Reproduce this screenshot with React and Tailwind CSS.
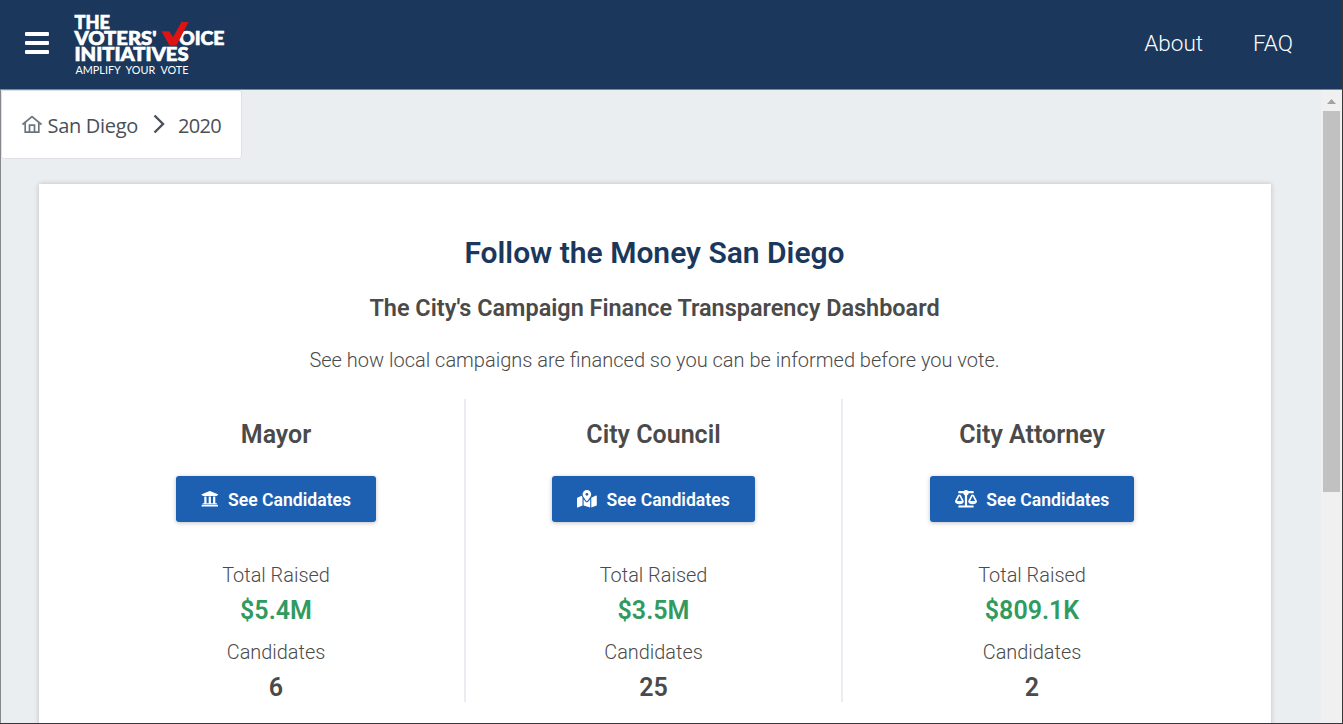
import { FaUniversity, FaMapMarkedAlt, FaBalanceScale } from "react-icons/fa";

const races = [
  { title: "Mayor", Icon: FaUniversity, iconClass: "h-[17.6px] w-[17.6px]", raised: "$5.4M", candidates: "6" },
  { title: "City Council", Icon: FaMapMarkedAlt, iconClass: "h-[17.6px] w-[19.8px]", raised: "$3.5M", candidates: "25" },
  { title: "City Attorney", Icon: FaBalanceScale, iconClass: "h-[17.6px] w-[22px]", raised: "$809.1K", candidates: "2" },
];

function Logo() {
  return (
    <svg width="152" height="64" viewBox="0 0 152 64" fill="#fff" className="overflow-visible font-['Lato',sans-serif]">
      <g fontWeight="900" fontSize="19.5" stroke="#fff" strokeWidth="0.7">
        <text x="0.5" y="17.200" textLength="35.500" lengthAdjust="spacingAndGlyphs">THE</text>
        <text x="0.5" y="33.400" textLength="82" lengthAdjust="spacingAndGlyphs">VOTERS'</text>
        <text x="105" y="33.400" textLength="45.5" lengthAdjust="spacingAndGlyphs">OICE</text>
        <text x="0.5" y="49.400" textLength="114" lengthAdjust="spacingAndGlyphs">INITIATIVES</text>
      </g>
      <path d="M87.500 19.200h7.800l3.700 6L107.500 10h7L102.500 33.500h-7z" fill="#dc1414" />
      <text x="1.500" y="61.700" fontSize="11.5" wordSpacing="3" textLength="113" lengthAdjust="spacingAndGlyphs">AMPLIFY YOUR VOTE</text>
    </svg>
  );
}

function Header() {
  return (
    <header className="flex h-[89px] shrink-0 items-start bg-[#1b385c] text-white">
      <button aria-label="Menu" className="mt-8 ml-[25px] flex h-[22px] w-6 flex-col justify-between">
        <span className="h-1 w-full rounded-[1px] bg-white" />
        <span className="h-1 w-full rounded-[1px] bg-white" />
        <span className="h-1 w-full rounded-[1px] bg-white" />
      </button>
      <div className="mt-3 ml-[25px]">
        <Logo />
      </div>
      <nav className="mt-[25px] mr-[49px] ml-auto flex gap-[50px] text-[22.500px] leading-9 font-light">
        <a>About</a>
        <a>FAQ</a>
      </nav>
    </header>
  );
}

function Breadcrumb() {
  return (
    <div className="flex h-[69px] w-[241px] items-center rounded-[3px] border border-[#dee2e6] bg-white pt-[2px] pl-5 font-['Open_Sans',sans-serif] text-[20px] tracking-[-0.3px] text-[#495057]">
      <svg width="20" height="20" viewBox="0 0 20 20" fill="none" stroke="#6c757d" strokeWidth="1.700" className="-mt-[3px] shrink-0">
        <path d="M0.500 10.500L10 2.500L19.500 10.500M3.200 8.500V18.200H16.800V8.500M7.500 18V11.200H12.500V18" />
      </svg>
      <span className="ml-[5.500px] w-[90.500px] whitespace-nowrap">San Diego</span>
      <svg width="12" height="20" viewBox="0 0 12 20" fill="none" stroke="#495057" strokeWidth="2.400" className="-mt-[3px] ml-[15px] shrink-0">
        <path d="M1.500 1.500L10 10L1.500 18.500" />
      </svg>
      <span className="ml-[13px] tracking-[-0.7px]">2020</span>
    </div>
  );
}

function Race({ title, Icon, iconClass, raised, candidates, last }) {
  return (
    <div className={"flex h-[303px] flex-col items-center " + (last ? "" : "border-r-2 border-[#e9edf1]")}>
      <h3 className="mt-[18px] text-[25px] leading-9 font-semibold">{title}</h3>
      <button className="mt-[23px] flex h-[46px] shrink-0 items-center rounded-[3px] bg-[#1d5fb1] px-[25px] text-[17.6px] font-semibold text-white shadow-[0_1px_4px_rgba(0,0,0,0.25)]">
        <Icon className={iconClass} />
        <span className="ml-[9.500px] pt-[2px] whitespace-nowrap">See Candidates</span>
      </button>
      <p className="mt-[39px] text-[19.900px] leading-[30px] font-light">Total Raised</p>
      <p className="mt-[3px] text-[25px] leading-[34px] font-semibold text-[#319a5f]">{raised}</p>
      <p className="mt-[10px] text-[19.900px] leading-[30px] font-light">Candidates</p>
      <p className="mt-[3px] text-[25px] leading-[34px] font-semibold">{candidates}</p>
    </div>
  );
}

function Scrollbar() {
  return (
    <div className="flex w-[21px] shrink-0 flex-col items-center bg-[#f0f0f0]">
      <svg width="9" height="5" viewBox="0 0 9 5" className="mt-[9px]" fill="#a3a3a3">
        <path d="M0 5L4.500 0L9 5z" />
      </svg>
      <div className="mt-[7px] h-[381px] w-[17px] bg-[#c1c1c1]" />
    </div>
  );
}

export default function App() {
  return (
    <div className="flex h-[724px] w-[1343px] flex-col overflow-hidden border-r border-b border-[#38363a] bg-[#1b385c] font-['Roboto',sans-serif] text-[#4a4a4a]">
      <Header />
      <div className="flex min-h-0 flex-1 border-t border-l border-[#85878c] bg-[#eaeef1]">
        <main className="min-w-0 flex-1">
          <Breadcrumb />
          <section className="mt-[25px] ml-[38px] h-[600px] w-[1232px] bg-white pt-[51px] pr-[50px] pl-[49px] text-center shadow-[0_0_5px_rgba(0,0,0,0.2)]">
            <h1 className="text-[30px] leading-9 font-semibold text-[#1b385c]">Follow the Money San Diego</h1>
            <h2 className="mt-[21px] text-[23.450px] leading-8 font-semibold">The City's Campaign Finance Transparency Dashboard</h2>
            <p className="mt-[21px] text-[20px] leading-[30px] font-light">
              See how local campaigns are financed so you can be informed before you vote.
            </p>
            <div className="mt-[24px] grid grid-cols-[378px_377px_378px]">
              {races.map((race, i) => (
                <Race key={race.title} {...race} last={i === races.length - 1} />
              ))}
            </div>
          </section>
        </main>
        <Scrollbar />
      </div>
    </div>
  );
}
